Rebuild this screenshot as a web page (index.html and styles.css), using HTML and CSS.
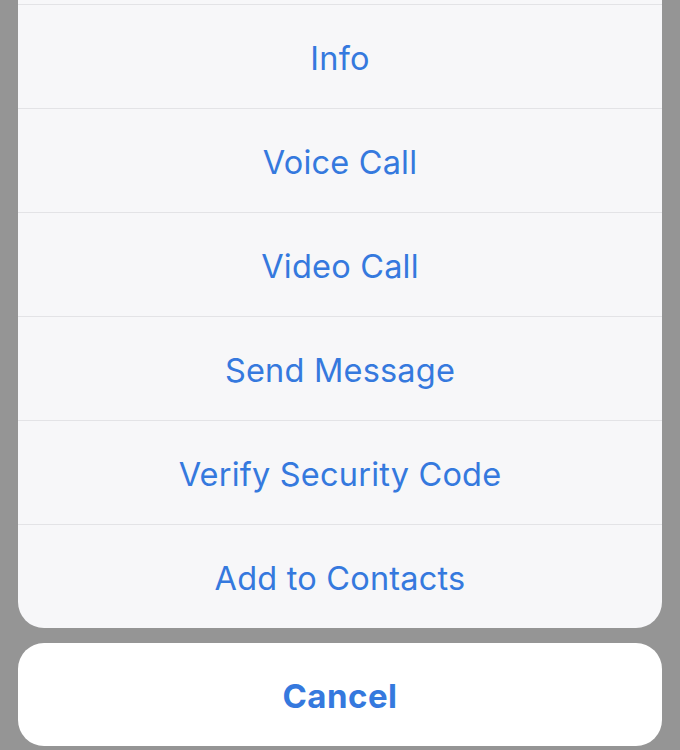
FILE: index.html
```html
<!DOCTYPE html>
<html>
<head>
<meta charset="utf-8">
<link rel="stylesheet" href="styles.css">
</head>
<body>
<div class="screen">
  <div class="group">
    <div class="stub"></div>
    <div class="row">Info</div>
    <div class="row">Voice Call</div>
    <div class="row">Video Call</div>
    <div class="row">Send Message</div>
    <div class="row">Verify Security Code</div>
    <div class="row">Add to Contacts</div>
  </div>
  <div class="cancel">Cancel</div>
</div>
</body>
</html>
```
FILE: styles.css
```css
html, body {
  margin: 0;
  padding: 0;
  background: #959595;
  width: 680px;
  height: 750px;
  overflow: hidden;
}
.screen {
  padding: 0 18px;
  display: flex;
  flex-direction: column;
  font-family: Inter, "Noto Sans", sans-serif;
}
.group {
  background: #f7f7f9;
  border-radius: 0 0 26px 26px;
  overflow: hidden;
}
.stub {
  height: 4px;
}
.row {
  box-sizing: border-box;
  height: 104px;
  padding-top: 4px;
  border-top: 1px solid #e3e3e6;
  display: flex;
  align-items: center;
  justify-content: center;
  color: #3579de;
  font-size: 32.5px;
  letter-spacing: 0.2px;
}
.cancel {
  box-sizing: border-box;
  margin-top: 15px;
  height: 103px;
  padding-top: 3px;
  background: #ffffff;
  border-radius: 26px;
  display: flex;
  align-items: center;
  justify-content: center;
  color: #3579de;
  font-size: 33px;
  font-weight: 700;
  letter-spacing: 0.5px;
}
```
